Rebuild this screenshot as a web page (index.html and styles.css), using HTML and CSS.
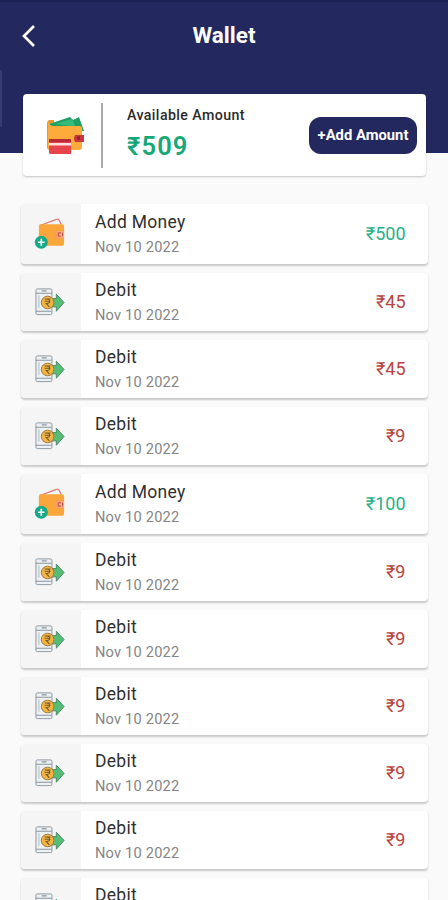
FILE: index.html
```html
<!DOCTYPE html>
<html lang="en">
<head>
<meta charset="utf-8">
<title>Wallet</title>
<link rel="stylesheet" href="styles.css">
</head>
<body>
<svg class="symbols" aria-hidden="true">
  <symbol id="add" viewBox="0 0 34 34">
    <path d="M7 8 23 2q2-1 3 1l2 4" fill="none" stroke="#df7774" stroke-width="1.3"/>
    <path d="M6 7h23q2 0 2 2v18q0 2-2 2H8q-3 0-3-3V10q0-2 1-3z" fill="#fba63a"/>
    <path d="M31 14h-8v7h8" fill="#f8c895" stroke="#f0935f" stroke-width="1"/>
    <path d="M28 15.800h-3v3.400h3M29.500 15.500v4" fill="none" stroke="#c84c42" stroke-width="1.300"/>
    <circle cx="7.500" cy="25.500" r="6.700" fill="#16a887"/>
    <path d="M7.500 22v7M4 25.500h7" stroke="#e9fff5" stroke-width="1.800"/>
  </symbol>
  <symbol id="debit" viewBox="0 0 34 34">
    <rect x="2" y="3.500" width="16.500" height="26.500" rx="1.500" fill="#edf1f3" stroke="#8b979f"/>
    <path d="M2 8h16M2 26.500h16M8 5.500h5" stroke="#8b979f" stroke-width="1.200"/>
    <path d="M5 10v13" stroke="#cbd6dc" stroke-width="2"/>
    <path d="M18 13.500h5V9l8 8.500-8 9V22h-5z" fill="#55bd76" stroke="#498b65"/>
    <circle cx="14" cy="17.500" r="6.500" fill="#f5b43e" stroke="#9c7942"/>
    <path d="M11 14h6M11 16.300h6M12.500 14c5-.5 5 5 0 4.500l3.300 3.500" fill="none" stroke="#725a34" stroke-width="1.100"/>
  </symbol>
</svg>
<header class="header">
  <svg class="back" viewBox="0 0 16 24"><path d="M13 2 3 12l10 10" fill="none" stroke="#fff" stroke-width="2.700"/></svg>
  <h1 class="title">Wallet</h1>
</header>
<main>
  <section class="balance">
    <svg class="wallet" viewBox="0 0 40 40">
      <path d="M4 5h5v30H5q-3 0-3-3V8q0-2 2-3z" fill="#eb982e"/>
      <path d="M4 9 25 2l3 3 6-3 5 14H5z" fill="#209f65"/>
      <path d="m10 9 17-5 4 8z" fill="#36ba7a"/>
      <path d="M4 7q0 4 5 4h26q2 0 2 3v18q0 3-3 3H6q-3 0-3-3V7z" fill="#fdac3c"/>
      <path d="M30 20h9v7h-9q-2-3 0-7z" fill="#c9343d"/><path d="M32 21.500h3v3h-3z" fill="#842332"/>
      <path d="M4 24h22v15H5q-1 0-1-2z" fill="#e6434a"/><path d="M4 24h22v3H4z" fill="#b92c36"/><path d="M4 28h22v2.500H4z" fill="#ffe0da"/>
    </svg>
    <div class="divider"></div>
    <div class="available"><div class="label">Available Amount</div><div class="total">₹509</div></div>
    <button class="button">+Add Amount</button>
  </section>
  <ul class="list">
    <li class="row row-add"><div class="thumb"><svg><use href="#add"/></svg></div><div class="info"><div class="name">Add Money</div><div class="date">Nov 10 2022</div></div><div class="amount">₹500</div></li>
    <li class="row"><div class="thumb"><svg><use href="#debit"/></svg></div><div class="info"><div class="name">Debit</div><div class="date">Nov 10 2022</div></div><div class="amount">₹45</div></li>
    <li class="row"><div class="thumb"><svg><use href="#debit"/></svg></div><div class="info"><div class="name">Debit</div><div class="date">Nov 10 2022</div></div><div class="amount">₹45</div></li>
    <li class="row"><div class="thumb"><svg><use href="#debit"/></svg></div><div class="info"><div class="name">Debit</div><div class="date">Nov 10 2022</div></div><div class="amount">₹9</div></li>
    <li class="row row-add"><div class="thumb"><svg><use href="#add"/></svg></div><div class="info"><div class="name">Add Money</div><div class="date">Nov 10 2022</div></div><div class="amount">₹100</div></li>
    <li class="row"><div class="thumb"><svg><use href="#debit"/></svg></div><div class="info"><div class="name">Debit</div><div class="date">Nov 10 2022</div></div><div class="amount">₹9</div></li>
    <li class="row"><div class="thumb"><svg><use href="#debit"/></svg></div><div class="info"><div class="name">Debit</div><div class="date">Nov 10 2022</div></div><div class="amount">₹9</div></li>
    <li class="row"><div class="thumb"><svg><use href="#debit"/></svg></div><div class="info"><div class="name">Debit</div><div class="date">Nov 10 2022</div></div><div class="amount">₹9</div></li>
    <li class="row"><div class="thumb"><svg><use href="#debit"/></svg></div><div class="info"><div class="name">Debit</div><div class="date">Nov 10 2022</div></div><div class="amount">₹9</div></li>
    <li class="row"><div class="thumb"><svg><use href="#debit"/></svg></div><div class="info"><div class="name">Debit</div><div class="date">Nov 10 2022</div></div><div class="amount">₹9</div></li>
    <li class="row"><div class="thumb"><svg><use href="#debit"/></svg></div><div class="info"><div class="name">Debit</div><div class="date">Nov 10 2022</div></div><div class="amount">₹9</div></li>
  </ul>
</main>
</body>
</html>
```
FILE: styles.css
```css
* { box-sizing: border-box; }
body {
  margin: 0;
  height: 900px;
  overflow: hidden;
  background: #fafafa;
  font-family: Roboto, "Noto Sans", sans-serif;
}
.symbols { position: absolute; width: 0; height: 0; }
.header {
  display: grid;
  grid-template-columns: 48px 1fr 48px;
  align-items: start;
  height: 153px;
  padding-top: 22px;
  background: linear-gradient(#383d70, #383d70) 0 68px / 2px 57px no-repeat #23285f;
  border-top: 2px solid #1b2053;
}
.back { width: 16px; height: 24px; margin-left: 21px; }
.title {
  margin: 0;
  color: #fff;
  font-size: 22.500px;
  font-weight: 700;
  line-height: 23px;
  text-align: center;
}
.balance {
  position: relative;
  display: flex;
  align-items: center;
  height: 82px;
  margin: -59px 22px 0 23px;
  padding: 0 9px 0 22px;
  background: #fff;
  border-radius: 4px;
  box-shadow: 0 1px 2px rgba(0, 0, 0, .22);
}
.wallet { width: 40px; height: 40px; }
.divider { width: 1.500px; height: 65px; margin-left: 16px; background: #aaa; }
.available { margin: -5px auto 0 24.500px; }
.label { font-size: 14.200px; line-height: 20px; font-weight: 500; letter-spacing: .4px; color: #2b2b2b; }
.total { margin-top: 6px; font-size: 25.500px; line-height: 30px; font-weight: 600; letter-spacing: 1.100px; color: #16a877; }
.button {
  width: 108px;
  height: 37px;
  padding: 0;
  border: 0;
  border-radius: 12px;
  background: #23285f;
  color: #fff;
  font: 700 14.800px/37px Roboto, sans-serif;
  white-space: nowrap;
}
.list {
  display: flex;
  flex-direction: column;
  gap: 9px;
  margin: 28px 20px 0 21px;
  padding: 0;
  list-style: none;
}
.row {
  display: flex;
  flex: none;
  align-items: center;
  height: 58px;
  padding-right: 22.500px;
  overflow: hidden;
  background: #fff;
  border-radius: 4px;
  box-shadow: 0 1.500px 2px rgba(0, 0, 0, .2);
}
.row-add { height: 60px; }
.thumb { display: flex; align-items: center; align-self: stretch; width: 60px; padding-left: 13px; background: #f5f5f5; }
.thumb svg { width: 33px; height: 34px; }
.info { flex: 1; padding-left: 14px; }
.name { font-size: 17.500px; line-height: 23px; letter-spacing: .3px; color: #303030; }
.date { margin-top: 3px; font-size: 14.600px; line-height: 20px; letter-spacing: .2px; color: #858585; }
.amount { font-size: 18px; line-height: 24px; color: #b9443f; }
.row-add .amount { color: #27b18a; }
```
